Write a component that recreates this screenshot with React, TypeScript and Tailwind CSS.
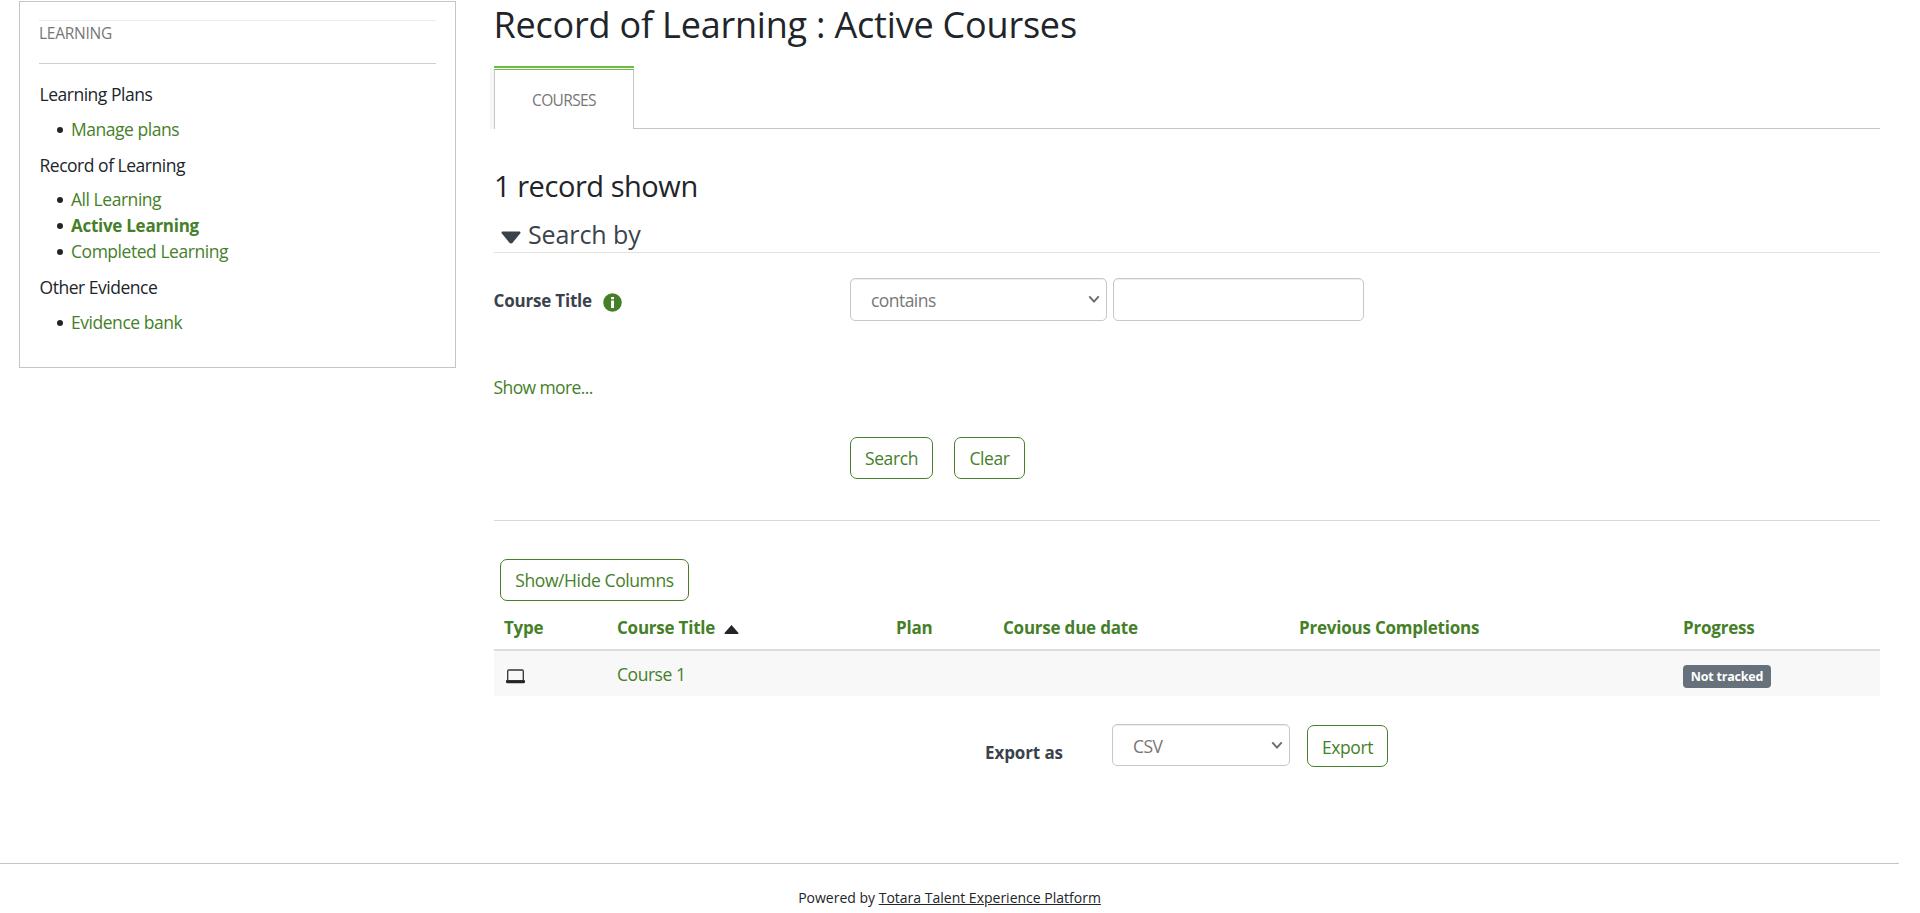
import type { ReactNode } from "react";

const link = "text-[17.5px] text-[#467f29] tracking-[-0.46px]";

function SideHeading({ children, className }: { children: ReactNode; className: string }) {
  return <p className={`h-[26px] text-[17.5px] tracking-[-0.48px] text-[#212529] ${className}`}>{children}</p>;
}

function SideLink({ children, active = false }: { children: ReactNode; active?: boolean }) {
  return (
    <li className="flex h-[26px] items-center pl-[17px]">
      <span className="mt-px mr-[8.5px] size-[6px] rounded-full bg-[#212529]" />
      <a className={active ? "pt-[2px] font-bold tracking-[-0.27px] text-[#467f29]" : link}>{children}</a>
    </li>
  );
}

function Button({ children, className }: { children: ReactNode; className: string }) {
  return (
    <button
      className={`h-[42px] rounded-[7px] border border-[#467f29] text-center text-[17.5px] tracking-[-0.4px] whitespace-nowrap text-[#467f29] ${className}`}
    >
      {children}
    </button>
  );
}

function Select({ value, className }: { value: string; className: string }) {
  return (
    <div
      className={`flex items-center justify-between rounded-[5px] border border-[#c8c8c8] pr-[6px] pl-[20px] text-[17.5px] tracking-[-0.55px] text-[#777] shadow-[inset_0_1px_1px_rgba(0,0,0,0.075)] ${className}`}
    >
      <span className="pt-px">{value}</span>
      <svg width="12" height="9" viewBox="0 0 12 9" fill="none" stroke="#6a6a6a" strokeWidth="1.9">
        <path d="M1.3 1.3 6 6.6l4.7-5.3" />
      </svg>
    </div>
  );
}

const columns = ["Type", "Course Title", "Plan", "Course due date", "Previous Completions", "Progress"];
const gridCols = "grid grid-cols-[113px_279px_107px_296px_384px_207px]";

export default function App() {
  return (
    <div className="h-[913px] w-[1899px] overflow-hidden bg-white font-['Open_Sans','Noto_Sans',sans-serif] text-[17px] leading-[26px] text-[#212529]">
      <div className="flex h-[863px] items-start pl-[19px]">
        <aside className="mt-px h-[367px] w-[437px] border border-[#c5c5c5] px-[19px] pt-[18px]">
          <h2 className="h-[44px] border-t border-b border-t-[#ececec] border-b-[#cfcfcf] text-[15.5px] leading-[24px] tracking-[-0.25px] text-[#777]">
            LEARNING
          </h2>
          <div className="pl-[0.5px]">
            <SideHeading className="mt-[17px]">Learning Plans</SideHeading>
            <ul className="mt-[9px]">
              <SideLink>Manage plans</SideLink>
            </ul>
            <SideHeading className="mt-[10px]">Record of Learning</SideHeading>
            <ul className="mt-[8px]">
              <SideLink>All Learning</SideLink>
              <SideLink active>Active Learning</SideLink>
              <SideLink>Completed Learning</SideLink>
            </ul>
            <SideHeading className="mt-[10px]">Other Evidence</SideHeading>
            <ul className="mt-[9px]">
              <SideLink>Evidence bank</SideLink>
            </ul>
          </div>
        </aside>

        <main className="ml-[38px] w-[1386px]">
          <h1 className="-ml-[0.5px] h-[48px] text-[36px] leading-[50px] tracking-[-0.2px]">
            Record of Learning : Active Courses
          </h1>

          <div className="relative mt-[18px] flex h-[63px]">
            <span className="absolute top-[2px] left-[-4px] h-[61px] w-[4px] bg-[#f6f6f6]" />
            <div className="w-[140px] border-t-2 border-[#6cbd45]">
              <div className="mt-px h-[60px] border-x border-t border-x-[#c5c5c5] border-t-[#6cbd45] text-center text-[15.5px] leading-[60px] tracking-[-0.62px] text-[#777]">
                COURSES
              </div>
            </div>
            <div className="flex-1 border-b border-[#c5c5c5]" />
          </div>

          <h2 className="mt-[37px] h-[40px] text-[29px] leading-[40px] tracking-[-0.45px]">1 record shown</h2>

          <div className="mt-[11px] flex h-[36px] items-start border-b border-[#e2e2e2] pl-[7px] text-[#3b424c]">
            <svg width="20" height="13" viewBox="0 0 20 13" className="mt-[14px]" fill="#3b424c">
              <path d="M1.5 0.5h17q1.4 0.3 0.8 1.8L11.6 11.8q-1.6 1.2-3.2 0L0.7 2.3Q0.1 0.8 1.5 0.5Z" />
            </svg>
            <h3 className="ml-[7px] text-[25px] leading-[34px] tracking-[-0.1px]">Search by</h3>
          </div>

          <div className="mt-[25px] flex h-[43px]">
            <div className="flex w-[356px] items-center pt-[2px]">
              <span className="-ml-[0.5px] font-bold tracking-[-0.2px] text-[#3b424c]">Course Title</span>
              <svg width="19" height="19" viewBox="0 0 19 19" className="ml-[11.5px] mt-[3px]">
                <circle cx="9.5" cy="9.5" r="9.3" fill="#467f29" />
                <path d="M8.1 4h2.9v2.2H8.1ZM8.1 7.5h2.9V15H8.1Z" fill="#fff" />
              </svg>
            </div>
            <Select value="contains" className="w-[257px]" />
            <input
              aria-label="Course Title"
              className="ml-[6px] w-[251px] rounded-[5px] border border-[#c8c8c8] shadow-[inset_0_1px_1px_rgba(0,0,0,0.075)]"
            />
          </div>

          <a className="mt-[53px] -ml-[0.5px] block h-[26px] text-[17.5px] tracking-[-0.6px] text-[#467f29]">Show more...</a>

          <div className="mt-[37px] flex gap-[21px] pl-[356px]">
            <Button className="w-[83px] leading-[40px]">Search</Button>
            <Button className="w-[71px] leading-[40px]">Clear</Button>
          </div>

          <hr className="mt-[41px] border-[#d8d8d8]" />

          <Button className="mt-[38px] ml-[6px] block w-[189px] leading-[40px]">Show/Hide Columns</Button>

          <div className={`${gridCols} h-[50px] border-b-2 border-[#ddd] pt-[5px] leading-[43px] font-bold tracking-[-0.22px] text-[#467f29]`}>
            {columns.map((c) => (
              <div key={c} className="flex items-center gap-[9px] pl-[10px]">
                {c}
                {c === "Course Title" && (
                  <svg width="15" height="9" viewBox="0 0 15 9" fill="#212529" className="mt-[3px]">
                    <path d="M7.5 0 14.5 8q0.3 0.9-0.7 0.9H1.2Q0.2 8.9 0.5 8Z" />
                  </svg>
                )}
              </div>
            ))}
          </div>
          <div className={`${gridCols} h-[45px] items-center bg-[#f8f8f8]`}>
            <div className="pl-[12px]">
              <svg width="19" height="15" viewBox="0 0 19 15" className="mt-[5px]">
                <rect x="1.7" y="1" width="15.6" height="11" rx="1.2" fill="none" stroke="#333" strokeWidth="1.3" />
                <path d="M0 11.3h19v1.5q0 1.5-1.5 1.5h-16Q0 14.300 0 12.8Z" fill="#212529" />
              </svg>
            </div>
            <a className={`pt-px pl-[10px] ${link}`}>Course 1</a>
            <div />
            <div />
            <div />
            <div className="pl-[10px]">
              <span className="mt-[6px] block h-[23px] w-[88px] rounded-[4px] bg-[#66717c] text-center text-[12.5px] leading-[23px] font-bold tracking-[-0.2px] text-white">
                Not tracked
              </span>
            </div>
          </div>

          <div className="mt-[28px] flex pl-[491px]">
            <span className="mt-[16px] w-[127px] font-bold tracking-[-0.1px] text-[#3b424c]">Export as</span>
            <Select value="CSV" className="h-[42px] w-[178px]" />
            <Button className="mt-px ml-[17px] w-[81px] leading-[42px]">Export</Button>
          </div>
        </main>
      </div>

      <footer className="h-[50px] border-t border-[#c5c5c5] pt-[24px] text-center text-[14px] leading-[20px]">
        Powered by <a className="underline">Totara Talent Experience Platform</a>
      </footer>
    </div>
  );
}
